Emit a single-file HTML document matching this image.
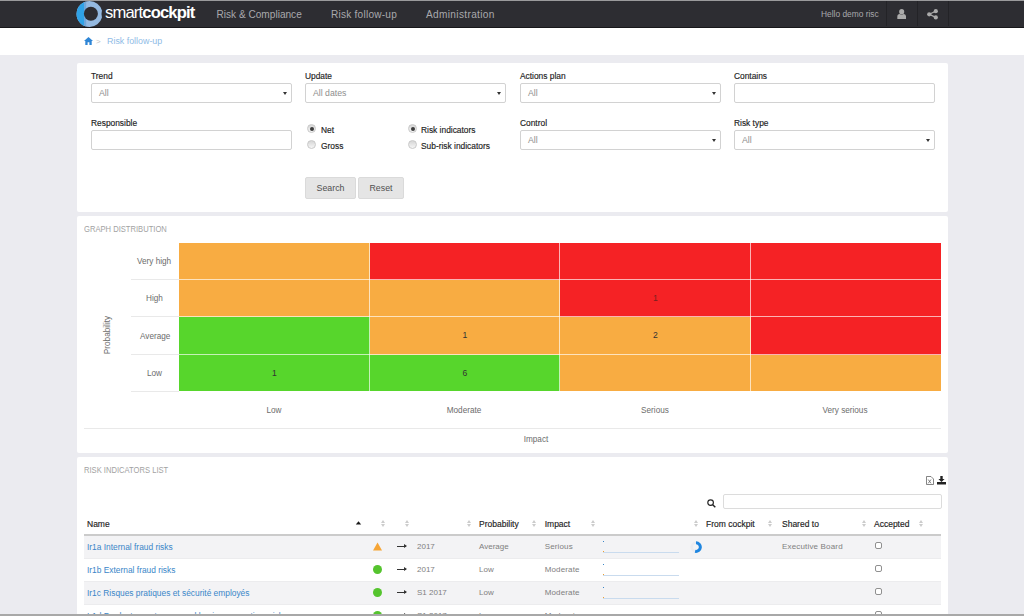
<!DOCTYPE html>
<html>
<head>
<meta charset="utf-8">
<title>Risk follow-up</title>
<style>
*{box-sizing:border-box;margin:0;padding:0}
html,body{width:1024px;height:616px;overflow:hidden}
body{background:#ebebf0;font-family:"Liberation Sans",sans-serif;font-size:9px;color:#333;position:relative}
.abs{position:absolute}
#nav{left:0;top:1px;width:1024px;height:26.5px;background:#2d2d32;border-bottom:1.5px solid #17171a}
#nav .it{position:absolute;top:0.5px;line-height:25px;color:#a9a9ad;font-size:10.1px;white-space:nowrap}
#crumb{left:0;top:27.5px;width:1024px;height:27.5px;background:#fff}
.panel{position:absolute;left:77px;width:871px;background:#fff;border-radius:2px}
.lbl{position:absolute;font-size:8.4px;color:#1d1d1d;-webkit-text-stroke:0.15px #1d1d1d;white-space:nowrap;line-height:10px}
.sel,.inp{position:absolute;height:20px;border:1px solid #d2d2d2;border-radius:2px;background:#fff;font-size:8.7px;color:#8e8e8e;line-height:18px;padding-left:7px}
.sel:after{content:"";position:absolute;right:4.5px;top:7.5px;border-left:2px solid transparent;border-right:2px solid transparent;border-top:3.2px solid #333}
.radio{position:absolute;width:9px;height:9px;border-radius:50%;border:1px solid #c9c9c9;background:linear-gradient(#d6d6d6,#f6f6f6)}
.radio.on:after{content:"";position:absolute;left:1.5px;top:1.5px;width:4px;height:4px;border-radius:50%;background:#3c3c3c}
.btn{position:absolute;height:22px;background:#e5e5e5;border:1px solid #dadada;border-radius:2px;font-size:8.8px;color:#505050;text-align:center;line-height:20px}
.ptitle{position:absolute;font-size:8.6px;color:#a2a2a2;white-space:nowrap;line-height:10px;transform:scaleX(0.885);transform-origin:0 0}
.cell{position:absolute;text-align:center;font-size:8.6px;color:#333}
.gl{position:absolute;background:rgba(255,255,255,0.66)}
.ax{position:absolute;font-size:8.2px;color:#6c6c6c;white-space:nowrap;line-height:10px}
.hline{position:absolute;height:1px;background:#e9e9e9}
.th{position:absolute;font-size:8.5px;color:#1d1d1d;-webkit-text-stroke:0.15px #1d1d1d;white-space:nowrap;line-height:10px}
.td{position:absolute;font-size:8px;color:#808080;white-space:nowrap;line-height:10px}
.lnk{color:#3a86c8;font-size:8.4px}
.row{position:absolute;left:84px;width:857px;height:23px;border-top:1px solid #ececee}
.row.odd{background:#f3f3f5}
.sort{position:absolute;width:5px;height:8px}
.sort:before{content:"";position:absolute;left:0;top:0;border-left:2px solid transparent;border-right:2px solid transparent;border-bottom:3px solid #ccc}
.sort:after{content:"";position:absolute;left:0;top:4px;border-left:2px solid transparent;border-right:2px solid transparent;border-top:3px solid #ccc}
.dot{position:absolute;width:9px;height:9px;border-radius:50%;background:#55c42e}
.arrow{position:absolute;width:9.5px;height:1.4px;background:#333;margin-left:-0.5px}
.arrow:after{content:"";position:absolute;right:-1px;top:-1.6px;border-top:2.3px solid transparent;border-bottom:2.3px solid transparent;border-left:3px solid #333}
.chk{position:absolute;width:7.4px;height:7.4px;border:1px solid #909090;border-radius:2px;background:#fff}
.spark{position:absolute;height:1px;background:#c9dbee;width:75.5px}
.spark:before{content:"";position:absolute;left:0;top:-10.5px;width:1px;height:1px;background:#3a86c8}
.spark:after{content:"";position:absolute;left:0;top:-1px;width:1px;height:1px;background:#f0a030}
</style>
</head>
<body>
<!-- NAV -->
<div class="abs" style="left:0;top:0;width:1024px;height:1px;background:#9a9a9c"></div>
<div id="nav" class="abs">
  <svg class="abs" style="left:76px;top:0px;overflow:visible" width="28" height="27" viewBox="76 1 28 27">
    <defs><clipPath id="lc"><path d="M89.6 1.05 A13 13 0 1 0 89.6 27.05 A13 13 0 0 0 101.95 17.5 Q101.1 14 101.95 10.6 A13 13 0 0 0 89.6 1.05 Z"/></clipPath></defs>
    <g clip-path="url(#lc)">
      <rect x="76" y="0" width="28" height="28" fill="#94b9e0"/>
      <rect x="76" y="0" width="10.2" height="28" fill="#6fa6da"/>
      <rect x="76" y="0" width="8" height="28" fill="#2fa2e6"/>
    </g>
    <circle cx="90.9" cy="13.7" r="7" fill="#2d2d32"/>
  </svg>
  <div class="abs" style="left:105px;top:-1.2px;line-height:25px;font-size:16.6px;color:#fff;letter-spacing:-0.85px;white-space:nowrap">smart<b>cockpit</b></div>
  <div class="it" style="left:216.5px">Risk &amp; Compliance</div>
  <div class="it" style="left:331px;letter-spacing:0.23px">Risk follow-up</div>
  <div class="it" style="left:426px;letter-spacing:0.34px">Administration</div>
  <div class="it" style="left:821px;top:1.2px;font-size:8.4px;color:#a8a8ac">Hello demo risc</div>
  <div class="abs" style="left:886px;top:0;width:1px;height:25px;background:#232327"></div>
  <div class="abs" style="left:917px;top:0;width:1px;height:25px;background:#232327"></div>
  <div class="abs" style="left:948px;top:0;width:1px;height:25px;background:#232327"></div>
  <svg class="abs" style="left:897px;top:7.6px" width="9.4" height="10.6" viewBox="0 0 9 10.4"><ellipse cx="4.5" cy="2.7" rx="2.5" ry="2.7" fill="#ababab"/><path d="M0.2 10.4 V7.6 Q0.2 5 2.6 4.9 Q4.5 6.4 6.4 4.9 Q8.8 5 8.8 7.6 V10.4 Z" fill="#ababab"/></svg>
  <svg class="abs" style="left:927.3px;top:8px" width="11" height="10.6" viewBox="0 0 11 10.6"><circle cx="8.8" cy="2.2" r="2.1" fill="#ababab"/><circle cx="2.2" cy="5.3" r="2.1" fill="#ababab"/><circle cx="8.8" cy="8.4" r="2.1" fill="#ababab"/><path d="M8.8 2.2 L2.2 5.3 L8.8 8.4" stroke="#ababab" stroke-width="1.2" fill="none"/></svg>
</div>
<!-- BREADCRUMB -->
<div id="crumb" class="abs">
  <svg class="abs" style="left:84px;top:9px" width="9" height="8" viewBox="0 0 9 8"><path d="M4.5 0 L9 4 H7.7 V8 H5.4 V5.2 H3.6 V8 H1.3 V4 H0 Z" fill="#2f86d6"/></svg>
  <div class="abs" style="left:96px;top:9px;font-size:8px;color:#c0c0c0;line-height:10px">&gt;</div>
  <div class="abs" style="left:107px;top:8.3px;font-size:8.9px;color:#8fbbe6;line-height:10px;white-space:nowrap">Risk follow-up</div>
</div>

<!-- FILTER PANEL -->
<div class="panel" style="top:62.5px;height:149.7px"></div>
<div class="lbl" style="left:91px;top:71px">Trend</div>
<div class="sel" style="left:91px;top:83px;width:201px">All</div>
<div class="lbl" style="left:305px;top:71px">Update</div>
<div class="sel" style="left:305px;top:83px;width:201px">All dates</div>
<div class="lbl" style="left:520px;top:71px">Actions plan</div>
<div class="sel" style="left:520px;top:83px;width:201px">All</div>
<div class="lbl" style="left:734px;top:71px">Contains</div>
<div class="inp" style="left:734px;top:83px;width:201px"></div>

<div class="lbl" style="left:91px;top:118px">Responsible</div>
<div class="inp" style="left:91px;top:130px;width:201px"></div>
<div class="radio on" style="left:307px;top:124px"></div>
<div class="lbl" style="left:321px;top:125px">Net</div>
<div class="radio" style="left:307px;top:140px"></div>
<div class="lbl" style="left:321px;top:141px">Gross</div>
<div class="radio on" style="left:408px;top:124px"></div>
<div class="lbl" style="left:421px;top:125px">Risk indicators</div>
<div class="radio" style="left:408px;top:140px"></div>
<div class="lbl" style="left:421px;top:141px">Sub-risk indicators</div>
<div class="lbl" style="left:520px;top:118px">Control</div>
<div class="sel" style="left:520px;top:130px;width:201px">All</div>
<div class="lbl" style="left:734px;top:118px">Risk type</div>
<div class="sel" style="left:734px;top:130px;width:201px">All</div>
<div class="btn" style="left:305px;top:177px;width:51px">Search</div>
<div class="btn" style="left:358px;top:177px;width:46px">Reset</div>

<!-- GRAPH PANEL -->
<div class="panel" style="top:215.5px;height:237.5px"></div>
<div class="ptitle" style="left:84px;top:223.8px">GRAPH DISTRIBUTION</div>
<div id="grid"></div>
<div class="hline" style="left:131px;top:279px;width:48px"></div>
<div class="hline" style="left:131px;top:316px;width:48px"></div>
<div class="hline" style="left:131px;top:354px;width:48px"></div>
<div class="hline" style="left:131px;top:391px;width:48px"></div>
<div class="hline" style="left:84px;top:428px;width:857px"></div>
<div class="ax" style="left:137px;top:256.5px">Very high</div>
<div class="ax" style="left:146px;top:293.5px">High</div>
<div class="ax" style="left:140px;top:331.5px">Average</div>
<div class="ax" style="left:147px;top:368.5px">Low</div>
<div class="ax" style="left:86px;top:330px;transform:rotate(-90deg);transform-origin:center;width:44px;text-align:center">Probability</div>
<div class="ax" style="left:234px;top:405.5px;width:80px;text-align:center">Low</div>
<div class="ax" style="left:424px;top:405.5px;width:80px;text-align:center">Moderate</div>
<div class="ax" style="left:615px;top:405.5px;width:80px;text-align:center">Serious</div>
<div class="ax" style="left:805px;top:405.5px;width:80px;text-align:center">Very serious</div>
<div class="ax" style="left:496px;top:435px;width:80px;text-align:center">Impact</div>

<!-- cells -->
<div class="cell" style="left:179px;top:243px;width:191px;height:37px;background:#f8ac42"></div>
<div class="cell" style="left:370px;top:243px;width:190px;height:37px;background:#f52225"></div>
<div class="cell" style="left:560px;top:243px;width:191px;height:37px;background:#f52225"></div>
<div class="cell" style="left:751px;top:243px;width:190px;height:37px;background:#f52225"></div>

<div class="cell" style="left:179px;top:280px;width:191px;height:37px;background:#f8ac42"></div>
<div class="cell" style="left:370px;top:280px;width:190px;height:37px;background:#f8ac42"></div>
<div class="cell" style="left:560px;top:280px;width:191px;height:37px;background:#f52225;line-height:36px;color:#7a2020">1</div>
<div class="cell" style="left:751px;top:280px;width:190px;height:37px;background:#f52225"></div>

<div class="cell" style="left:179px;top:317px;width:191px;height:38px;background:#57d62c"></div>
<div class="cell" style="left:370px;top:317px;width:190px;height:38px;background:#f8ac42;line-height:37px">1</div>
<div class="cell" style="left:560px;top:317px;width:191px;height:38px;background:#f8ac42;line-height:37px">2</div>
<div class="cell" style="left:751px;top:317px;width:190px;height:38px;background:#f52225"></div>

<div class="cell" style="left:179px;top:355px;width:191px;height:36px;background:#57d62c;line-height:36px">1</div>
<div class="cell" style="left:370px;top:355px;width:190px;height:36px;background:#57d62c;line-height:36px">6</div>
<div class="cell" style="left:560px;top:355px;width:191px;height:36px;background:#f8ac42"></div>
<div class="cell" style="left:751px;top:355px;width:190px;height:36px;background:#f8ac42"></div>

<div class="gl" style="left:368.5px;top:243px;width:1.5px;height:148px"></div>
<div class="gl" style="left:558.6px;top:243px;width:1.5px;height:148px"></div>
<div class="gl" style="left:749.5px;top:243px;width:1.5px;height:148px"></div>
<div class="gl" style="left:179px;top:279px;width:762px;height:1.3px"></div>
<div class="gl" style="left:179px;top:316px;width:762px;height:1.4px"></div>
<div class="gl" style="left:179px;top:353.8px;width:762px;height:1.4px"></div>

<!-- LIST PANEL -->
<div class="panel" style="top:456.8px;height:170px"></div>
<div class="ptitle" style="left:84px;top:464.6px">RISK INDICATORS LIST</div>
<div class="inp" style="left:722.5px;top:493.5px;width:219.5px;height:15px;border-color:#dcdcdc"></div>
<svg class="abs" style="left:707px;top:499px" width="9" height="9" viewBox="0 0 9 9"><circle cx="3.6" cy="3.6" r="2.8" fill="none" stroke="#222" stroke-width="1.15"/><path d="M5.7 5.7 L8.3 8.3" stroke="#222" stroke-width="1.4"/></svg>
<svg class="abs" style="left:926px;top:476px" width="8" height="9" viewBox="0 0 8 9"><path d="M0.5 0.5 H5 L7.5 3 V8.5 H0.5 Z" fill="none" stroke="#666" stroke-width="0.8"/><path d="M2.2 3.5 L5 7.3 M5 3.5 L2.2 7.3" stroke="#666" stroke-width="0.8"/></svg>
<svg class="abs" style="left:937px;top:476px" width="9" height="9" viewBox="0 0 9 9"><path d="M3.3 0 H5.7 V3 H7.6 L4.5 6 L1.4 3 H3.3 Z" fill="#222"/><path d="M0 6 H9 V8.5 H0 Z" fill="#222"/></svg>

<div class="abs" style="left:84px;top:534.3px;width:857px;height:1.7px;background:#cbcbcb"></div>
<div class="row odd" style="top:535.5px;border-top:0"></div>
<div class="row" style="top:558.3px"></div>
<div class="row odd" style="top:581.3px"></div>
<div class="row" style="top:604.2px"></div>

<div class="th" style="left:87px;top:519px">Name</div>
<svg class="abs" style="left:355px;top:520px" width="7" height="6" viewBox="0 0 7 6"><path d="M3.5 1.2 L6.2 4.5 H0.8 Z" fill="#1a1a1a"/></svg>
<div class="sort" style="left:380.7px;top:520.3px"></div>
<div class="sort" style="left:404.7px;top:520.3px"></div>
<div class="sort" style="left:467px;top:520.3px"></div>
<div class="th" style="left:479px;top:519px">Probability</div>
<div class="sort" style="left:532.3px;top:520.3px"></div>
<div class="th" style="left:544.7px;top:519px">Impact</div>
<div class="sort" style="left:590.8px;top:520.3px"></div>
<div class="sort" style="left:694px;top:520px"></div>
<div class="th" style="left:706px;top:519px">From cockpit</div>
<div class="sort" style="left:768px;top:520px"></div>
<div class="th" style="left:782px;top:519px">Shared to</div>
<div class="sort" style="left:862px;top:520px"></div>
<div class="th" style="left:874px;top:519px">Accepted</div>
<div class="sort" style="left:919px;top:520px"></div>

<!-- row 1 -->
<div class="td lnk" style="left:87px;top:542px">Ir1a Internal fraud risks</div>
<svg class="abs" style="left:373px;top:542px" width="10" height="9" viewBox="0 0 10 9"><path d="M4.5 0.4 L9 8.5 H0 Z" fill="#f6a535"/></svg>
<div class="arrow" style="left:397px;top:546px"></div>
<div class="td" style="left:417px;top:542px">2017</div>
<div class="td" style="left:479px;top:542px">Average</div>
<div class="td" style="left:544.7px;letter-spacing:0.15px;top:542px">Serious</div>
<div class="spark" style="left:603.3px;top:551.8px"></div>
<svg class="abs" style="left:690px;top:541px" width="12" height="13" viewBox="0 0 12 13"><circle cx="6" cy="6.1" r="4.3" fill="none" stroke="#ececf0" stroke-width="2.6"/><path d="M6 1.8 A4.3 4.3 0 1 1 5.1 10.3" fill="none" stroke="#1f86e0" stroke-width="3"/></svg>
<div class="td" style="left:782px;top:542px;letter-spacing:0.17px">Executive Board</div>
<div class="chk" style="left:875px;top:542px"></div>
<!-- row 2 -->
<div class="td lnk" style="left:87px;top:565px">Ir1b External fraud risks</div>
<div class="dot" style="left:373px;top:565px"></div>
<div class="arrow" style="left:397px;top:569px"></div>
<div class="td" style="left:417px;top:565px">2017</div>
<div class="td" style="left:479px;top:565px">Low</div>
<div class="td" style="left:544.7px;letter-spacing:0.15px;top:565px">Moderate</div>
<div class="spark" style="left:603.3px;top:574.8px"></div>
<div class="chk" style="left:875px;top:565px"></div>
<!-- row 3 -->
<div class="td lnk" style="left:87px;top:588px">Ir1c Risques pratiques et sécurité employés</div>
<div class="dot" style="left:373px;top:588px"></div>
<div class="arrow" style="left:397px;top:592px"></div>
<div class="td" style="left:417px;top:588px">S1 2017</div>
<div class="td" style="left:479px;top:588px">Low</div>
<div class="td" style="left:544.7px;letter-spacing:0.15px;top:588px">Moderate</div>
<div class="spark" style="left:603.3px;top:597.8px"></div>
<div class="chk" style="left:875px;top:588px"></div>
<!-- row 4 -->
<div class="td lnk" style="left:87px;top:611px">Ir1d Products, customers and business practices risks</div>
<div class="dot" style="left:373px;top:611px"></div>
<div class="arrow" style="left:397px;top:615px"></div>
<div class="td" style="left:417px;top:611px">S1 2017</div>
<div class="td" style="left:479px;top:611px">Low</div>
<div class="td" style="left:544.7px;letter-spacing:0.15px;top:611px">Moderate</div>
<div class="chk" style="left:875px;top:611px"></div>

<!-- bottom edge -->
<div class="abs" style="left:0;top:614.4px;width:1024px;height:2px;background:#a8a8a8"></div>
</body>
</html>
